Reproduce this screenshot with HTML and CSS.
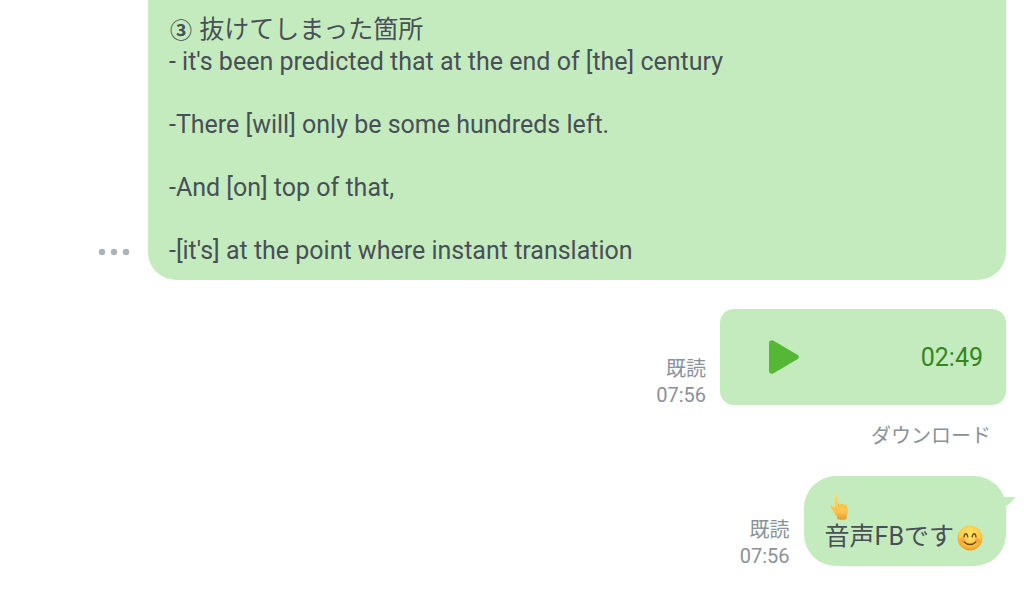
FILE: index.html
```html
<!DOCTYPE html>
<html lang="ja">
<head>
    <meta charset="UTF-8">
    <title>チャット</title>
    <link rel="stylesheet" href="styles.css">
</head>
<body>
    <main class="chat">
        <div class="message message-long">
            <button type="button" class="more" aria-label="メニュー">
                <svg width="32" height="8" viewBox="0 0 32 8">
                    <circle cx="4" cy="4" r="3.2"/>
                    <circle cx="16" cy="4" r="3.2"/>
                    <circle cx="28" cy="4" r="3.2"/>
                </svg>
            </button>
            <div class="bubble bubble-continued">
                <p><span class="number">③</span> 抜けてしまった箇所<br>- it's been predicted that at the end of [the] century</p>
                <p>-There [will] only be some hundreds left.</p>
                <p>-And [on] top of that,</p>
                <p>-[it's] at the point where instant translation</p>
            </div>
        </div>

        <div class="message">
            <div class="meta">
                <span>既読</span>
                <time>07:56</time>
            </div>
            <div class="audio">
                <button type="button" class="play" aria-label="再生">
                    <svg width="30" height="34" viewBox="0 0 30 34">
                        <path d="M0 3.2C0 .6 2.4-.6 4.600.7L28.300 14.800C30.200 16 30.200 18 28.300 19.200L4.600 33.300C2.400 34.600 0 33.400 0 30.800Z"/>
                    </svg>
                </button>
                <time class="duration">02:49</time>
            </div>
        </div>
        <a href="#" class="download">ダウンロード</a>

        <div class="message">
            <div class="meta">
                <span>既読</span>
                <time>07:56</time>
            </div>
            <div class="bubble bubble-tail">
                <svg class="tail" width="14" height="14" viewBox="0 0 14 14" aria-hidden="true">
                    <path d="M0 0H13.500C10 5 6 8.500 0 12Z"/>
                </svg>
                <p>
                    <svg class="emoji" width="26" height="26" viewBox="0 0 26 26" role="img" aria-label="上を指す手">
                        <defs>
                            <linearGradient id="skin" x1="0" y1="0" x2="0" y2="1">
                                <stop offset="0" stop-color="#ffdc68"/>
                                <stop offset=".7" stop-color="#fbc24b"/>
                                <stop offset="1" stop-color="#e99b2b"/>
                            </linearGradient>
                        </defs>
                        <path fill="url(#skin)" d="M6.500 1.500C6.500-.4 9.700-.4 9.800 1.500L10.300 9.800C11.500 8.800 13 9 13.700 10.200C14.900 9.500 16.400 9.900 17 11C18.600 10.500 19.800 11.500 19.800 13.200V17.500C19.800 19.500 19.300 20.800 18.700 22V24.500C18.700 26.300 9 26.300 9 24.500V22.300C6.800 20.500 5.800 18.300 4.500 16L2.700 13.200C1.800 11.700 3.500 10.700 4.800 11.800L6.900 14Z"/>
                        <path fill="none" stroke="#e3a136" stroke-width=".6" stroke-linecap="round" d="M10.500 10.500V13M13.800 10.700V13.500M17 11.500V14M7 14L8.500 16M9.500 22.800Q13.500 24 18.300 22.500"/>
                    </svg><br>
                    音声FBです<svg class="emoji" width="26" height="26" viewBox="0 0 26 26" role="img" aria-label="笑顔">
                        <defs>
                            <radialGradient id="face" cx=".5" cy=".35" r=".65">
                                <stop offset="0" stop-color="#ffe767"/>
                                <stop offset=".65" stop-color="#fdca45"/>
                                <stop offset="1" stop-color="#ee9625"/>
                            </radialGradient>
                            <radialGradient id="blush">
                                <stop offset="0" stop-color="#f5803a" stop-opacity=".7"/>
                                <stop offset="1" stop-color="#f5803a" stop-opacity="0"/>
                            </radialGradient>
                        </defs>
                        <circle cx="13" cy="13" r="12.500" fill="url(#face)"/>
                        <circle cx="5.500" cy="15.500" r="4" fill="url(#blush)"/>
                        <circle cx="20.500" cy="15.500" r="4" fill="url(#blush)"/>
                        <path fill="none" stroke="#714318" stroke-width="1.400" stroke-linecap="round" d="M7 11.800C7.700 7.800 10 7.800 10.800 11.800M15.200 11.800C16 7.800 18.300 7.800 19 11.800M7.300 17C10.300 20.300 15.700 20.300 18.700 17"/>
                    </svg>
                </p>
            </div>
        </div>
    </main>
</body>
</html>
```

FILE: styles.css
```css
body {
    margin: 0;
    background-color: #fff;
    color: #494f58;
    font-family: Roboto, "Noto Sans CJK JP", sans-serif;
    font-size: 25px;
    line-height: 31px;
}
button {
    padding: 0;
    border: none;
    background: none;
    cursor: pointer;
}
svg {
    display: block;
}
.chat {
    display: flex;
    flex-direction: column;
    padding: 0 18px 24px 98px;
}
.message {
    display: flex;
    justify-content: flex-end;
    align-items: flex-end;
    gap: 14px;
}
.message-long {
    gap: 18px;
    margin-bottom: 29px;
}
.more {
    margin-bottom: 24px;
    fill: #adb3ba;
}
.bubble {
    position: relative;
    padding: 14px 21px;
    border-radius: 32px;
    background-color: #c4ebbd;
}
.bubble p {
    margin: 0;
}
.bubble-continued {
    flex: 1;
    border-radius: 0 0 28px 28px;
}
.bubble-continued p + p {
    margin-top: 32px;
}
.number {
    margin: 0 1px;
    font-size: 22px;
    font-weight: 700;
}
.meta {
    display: flex;
    flex-direction: column;
    align-items: flex-end;
    gap: 6px;
    color: #8b9199;
    font-size: 20px;
    line-height: 20px;
}
.audio {
    box-sizing: border-box;
    display: flex;
    align-items: center;
    justify-content: space-between;
    width: 286px;
    padding: 31px 23px 31px 49px;
    border-radius: 14px;
    background-color: #c4ebbd;
}
.play {
    fill: #54b736;
}
.duration {
    color: #37851f;
}
.download {
    align-self: flex-end;
    margin: 18px 15px 27px 0;
    color: #8b9199;
    font-size: 20px;
    line-height: 26px;
    text-decoration: none;
}
.tail {
    position: absolute;
    top: 21px;
    right: -10px;
    fill: #c4ebbd;
}
.emoji {
    display: inline-block;
    margin: 0 2px 0 3px;
    vertical-align: -6px;
}
```
